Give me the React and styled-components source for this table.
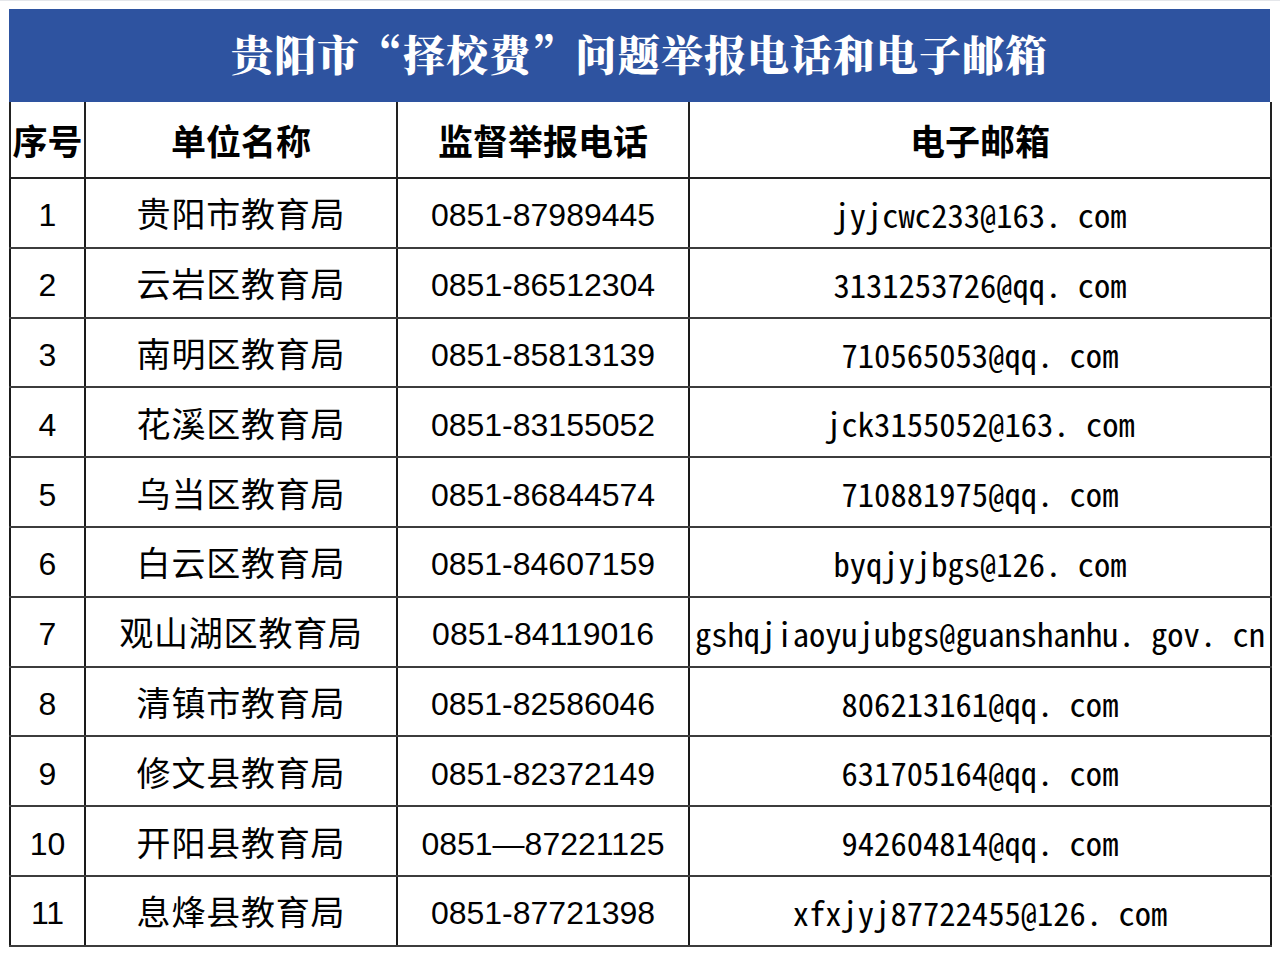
import React from 'react';
import styled, { createGlobalStyle } from 'styled-components';

const GlobalStyle = createGlobalStyle`
  html, body {
    margin: 0;
    padding: 0;
    background: #fff;
  }
  body {
    font-family: "Noto Sans CJK SC", "Liberation Sans", sans-serif;
  }
`;

const Page = styled.div`
  width: 1280px;
  height: 954px;
  padding: 8px 10px 0 9px;
  box-sizing: border-box;
  border-top: 1px solid #e4e6ea;
`;

const TitleBar = styled.div`
  height: 93px;
  width: 1261px;
  box-sizing: border-box;
  padding-bottom: 6px;
  background: #2e53a0;
  display: flex;
  align-items: center;
  justify-content: center;
  color: #fff;
  font-family: "Noto Serif CJK SC", "Noto Sans CJK SC", serif;
  font-weight: 900;
  font-size: 42px;
  letter-spacing: 1px;
`;

const Table = styled.table`
  width: 1261px;
  border-collapse: collapse;
  table-layout: fixed;
`;

const HeadCell = styled.th`
  height: 75px;
  padding: 0;
  font-family: "Noto Sans CJK SC", sans-serif;
  font-weight: 700;
  font-size: 35px;
  line-height: 1;
  color: #000;
  text-align: center;
  border: 2px solid #222;
  border-top: none;
  white-space: nowrap;
`;

const padTop = { num: '5px', phone: '5px', name: '1px', mail: '3px' };

const Cell = styled.td`
  height: 69.8px;
  padding: ${(p) => padTop[p.$kind]} 0 0;
  box-sizing: border-box;
  line-height: 1;
  text-align: center;
  color: #000;
  border-left: 2px solid #1a1a1a;
  border-right: 2px solid #1a1a1a;
  border-bottom: 2px solid #3c3c3c;
  white-space: nowrap;
  font-size: ${(p) => (p.$kind === 'name' ? '34px' : p.$kind === 'mail' ? '32.6px' : '32px')};
  font-family: ${(p) =>
    p.$kind === 'name'
      ? '"Noto Sans CJK SC", sans-serif'
      : p.$kind === 'mail'
      ? '"Noto Sans Mono CJK SC", "Liberation Mono", monospace'
      : '"Liberation Sans", Arial, sans-serif'};
  letter-spacing: ${(p) => (p.$kind === 'name' ? '0.8px' : '0')};
`;

const rows = [
  ['1', '贵阳市教育局', '0851-87989445', 'jyjcwc233@163. com'],
  ['2', '云岩区教育局', '0851-86512304', '3131253726@qq. com'],
  ['3', '南明区教育局', '0851-85813139', '710565053@qq. com'],
  ['4', '花溪区教育局', '0851-83155052', 'jck3155052@163. com'],
  ['5', '乌当区教育局', '0851-86844574', '710881975@qq. com'],
  ['6', '白云区教育局', '0851-84607159', 'byqjyjbgs@126. com'],
  ['7', '观山湖区教育局', '0851-84119016', 'gshqjiaoyujubgs@guanshanhu. gov. cn'],
  ['8', '清镇市教育局', '0851-82586046', '806213161@qq. com'],
  ['9', '修文县教育局', '0851-82372149', '631705164@qq. com'],
  ['10', '开阳县教育局', '0851—87221125', '942604814@qq. com'],
  ['11', '息烽县教育局', '0851-87721398', 'xfxjyj87722455@126. com'],
];

export default function App() {
  return (
    <Page>
      <GlobalStyle />
      <TitleBar>贵阳市“择校费”问题举报电话和电子邮箱</TitleBar>
      <Table>
        <colgroup>
          <col style={{ width: 75 }} />
          <col style={{ width: 312 }} />
          <col style={{ width: 292 }} />
          <col style={{ width: 582 }} />
        </colgroup>
        <thead>
          <tr>
            <HeadCell>序号</HeadCell>
            <HeadCell>单位名称</HeadCell>
            <HeadCell>监督举报电话</HeadCell>
            <HeadCell>电子邮箱</HeadCell>
          </tr>
        </thead>
        <tbody>
          {rows.map((r) => (
            <tr key={r[0]}>
              <Cell $kind="num">{r[0]}</Cell>
              <Cell $kind="name">{r[1]}</Cell>
              <Cell $kind="phone">{r[2]}</Cell>
              <Cell $kind="mail">{r[3]}</Cell>
            </tr>
          ))}
        </tbody>
      </Table>
    </Page>
  );
}
